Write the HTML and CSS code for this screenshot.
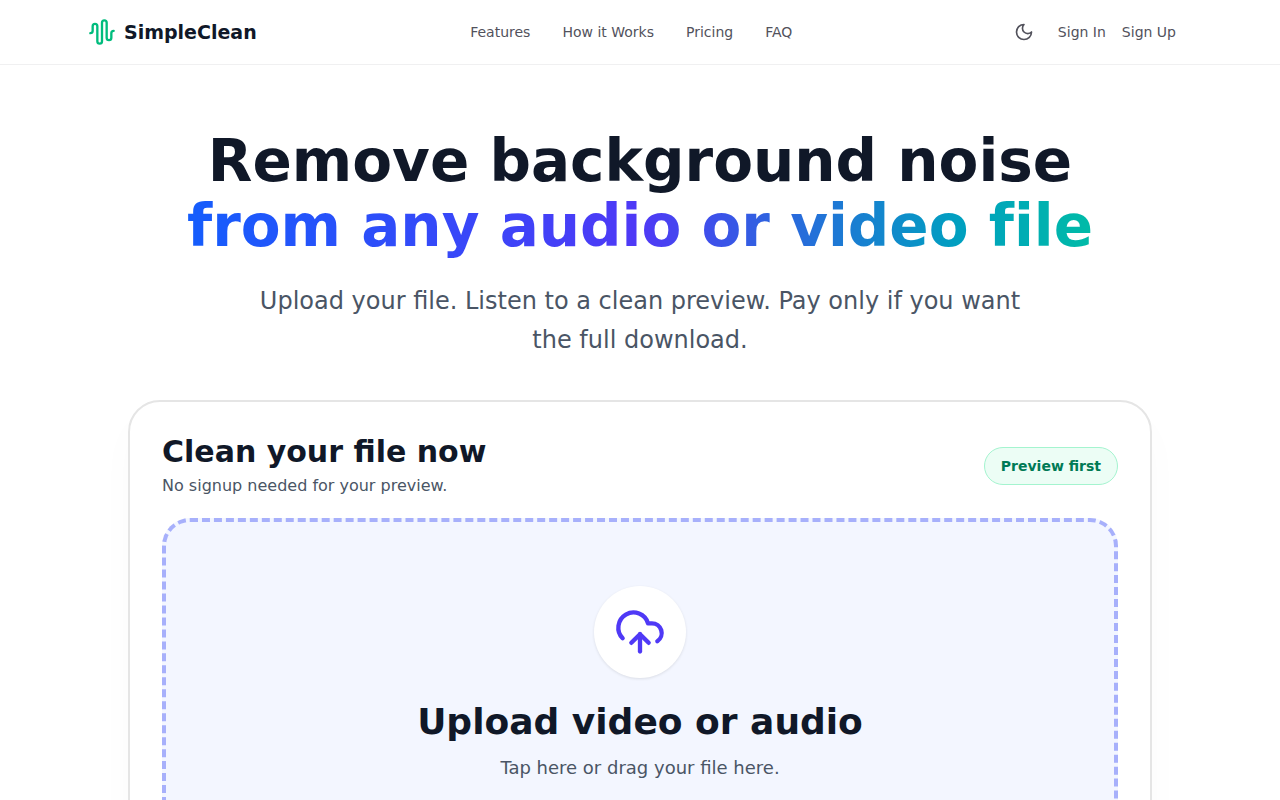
FILE: index.html
```html
<!DOCTYPE html>
<html lang="en">
<head>
    <meta charset="UTF-8">
    <meta name="viewport" content="width=device-width, initial-scale=1.0">
    <title>SimpleClean</title>
    <link rel="stylesheet" href="styles.css">
</head>
<body>
    <header class="site-header">
        <div class="header-inner">
            <a href="#" class="logo">
                <svg class="logo-icon" viewBox="0 0 24 24" aria-hidden="true">
                    <path d="M2 13a2 2 0 0 0 2-2V7a2 2 0 0 1 4 0v13a2 2 0 0 0 4 0V4a2 2 0 0 1 4 0v13a2 2 0 0 0 4 0v-4a2 2 0 0 1 2-2"/>
                </svg>
                <span>SimpleClean</span>
            </a>
            <nav class="nav">
                <a href="#features">Features</a>
                <a href="#how-it-works">How it Works</a>
                <a href="#pricing">Pricing</a>
                <a href="#faq">FAQ</a>
            </nav>
            <div class="account">
                <button type="button" class="theme-toggle" aria-label="Toggle theme">
                    <svg viewBox="0 0 24 24" aria-hidden="true">
                        <path d="M12 3a6 6 0 0 0 9 9 9 9 0 1 1-9-9Z"/>
                    </svg>
                </button>
                <a href="#sign-in">Sign In</a>
                <a href="#sign-up">Sign Up</a>
            </div>
        </div>
    </header>

    <main class="hero">
        <h1 class="hero-title">
            Remove background noise
            <span class="gradient-text">from any audio or video file</span>
        </h1>
        <p class="hero-text">Upload your file. Listen to a clean preview. Pay only if you want the full download.</p>

        <section class="card">
            <div class="card-header">
                <div>
                    <h2 class="card-title">Clean your file now</h2>
                    <p class="card-text">No signup needed for your preview.</p>
                </div>
                <span class="badge">Preview first</span>
            </div>
            <label class="dropzone" for="fileInput">
                <input type="file" id="fileInput" class="file-input" accept="audio/*,video/*">
                <span class="upload-circle">
                    <svg viewBox="0 0 24 24" aria-hidden="true">
                        <path d="M12 13v8"/>
                        <path d="M4 14.899A7 7 0 1 1 15.71 8h1.79a4.5 4.5 0 0 1 2.5 8.242"/>
                        <path d="m8 17 4-4 4 4"/>
                    </svg>
                </span>
                <span class="dropzone-title">Upload video or audio</span>
                <span class="dropzone-text">Tap here or drag your file here.</span>
            </label>
        </section>
    </main>
</body>
</html>
```
FILE: styles.css
```css
* {
    box-sizing: border-box;
}

body {
    margin: 0;
    font-family: "DejaVu Sans", sans-serif;
    background-color: #ffffff;
    color: #101828;
}

h1, h2, p {
    margin: 0;
}

a {
    color: inherit;
    text-decoration: none;
}

svg {
    display: block;
    fill: none;
    stroke: currentColor;
    stroke-width: 2;
    stroke-linecap: round;
    stroke-linejoin: round;
}

/* Header */
.site-header {
    border-bottom: 1px solid #f0f0f1;
}

.header-inner {
    display: flex;
    align-items: center;
    justify-content: space-between;
    max-width: 1152px;
    height: 64px;
    margin: 0 auto;
    padding: 0 24px;
}

.logo {
    display: flex;
    align-items: center;
    gap: 8px;
    font-size: 19px;
    font-weight: bold;
}

.logo-icon {
    width: 28px;
    height: 28px;
    color: #00bc7d;
}

.nav {
    display: flex;
    gap: 32px;
    font-size: 14px;
    color: #52525c;
}

.account {
    display: flex;
    align-items: center;
    gap: 16px;
    padding-right: 16px;
    font-size: 14px;
    color: #52525c;
}

.nav a:hover,
.account a:hover {
    color: #101828;
}

.theme-toggle {
    padding: 8px;
    border: none;
    border-radius: 8px;
    background: none;
    color: inherit;
    cursor: pointer;
}

.theme-toggle svg {
    width: 20px;
    height: 20px;
}

/* Hero */
.hero {
    max-width: 1072px;
    margin: 0 auto;
    padding: 64px 24px;
    text-align: center;
}

.hero-title {
    font-size: 58px;
    line-height: 65px;
    font-variant-ligatures: none;
}

.gradient-text {
    display: table;
    margin: 0 auto;
    background: linear-gradient(to right, #155dfc 0%, #4f39f6 50%, #009fc0 85%, #00bba7 100%);
    -webkit-background-clip: text;
    background-clip: text;
    color: transparent;
}

.hero-text {
    max-width: 768px;
    margin: 23px auto 40px;
    font-size: 24px;
    line-height: 39px;
    color: #4a5565;
}

/* Upload card */
.card {
    padding: 32px;
    border: 2px solid #e5e5e5;
    border-radius: 32px;
    background-color: #ffffff;
    box-shadow: 0 20px 40px rgba(0, 0, 0, 0.02);
}

.card-header {
    display: flex;
    align-items: center;
    justify-content: space-between;
    gap: 16px;
    margin-bottom: 20px;
    text-align: left;
}

.card-title {
    font-size: 30px;
    line-height: 36px;
}

.card-text {
    margin-top: 4px;
    font-size: 16px;
    line-height: 24px;
    color: #4a5565;
}

.badge {
    padding: 8px 16px;
    border: 1px solid #a4f4cf;
    border-radius: 20px;
    background-color: #ecfdf5;
    color: #007a55;
    font-size: 14px;
    font-weight: bold;
    line-height: 20px;
}

.dropzone {
    display: flex;
    flex-direction: column;
    align-items: center;
    padding: 64px 24px;
    border: 4px dashed #a7b0fb;
    border-radius: 28px;
    background-color: #f3f6ff;
    cursor: pointer;
}

/* the label is the visible control */
.file-input {
    position: absolute;
    width: 1px;
    height: 1px;
    opacity: 0;
}

.upload-circle {
    padding: 20px;
    border-radius: 50%;
    background-color: #ffffff;
    color: #4f39f6;
    box-shadow: 0 1px 3px rgba(0, 0, 0, 0.1);
}

.upload-circle svg {
    width: 52px;
    height: 52px;
}

.dropzone-title {
    margin-top: 24px;
    font-size: 36px;
    font-weight: bold;
    line-height: 40px;
}

.dropzone-text {
    margin-top: 12px;
    font-size: 18px;
    line-height: 28px;
    color: #4a5565;
}
```
